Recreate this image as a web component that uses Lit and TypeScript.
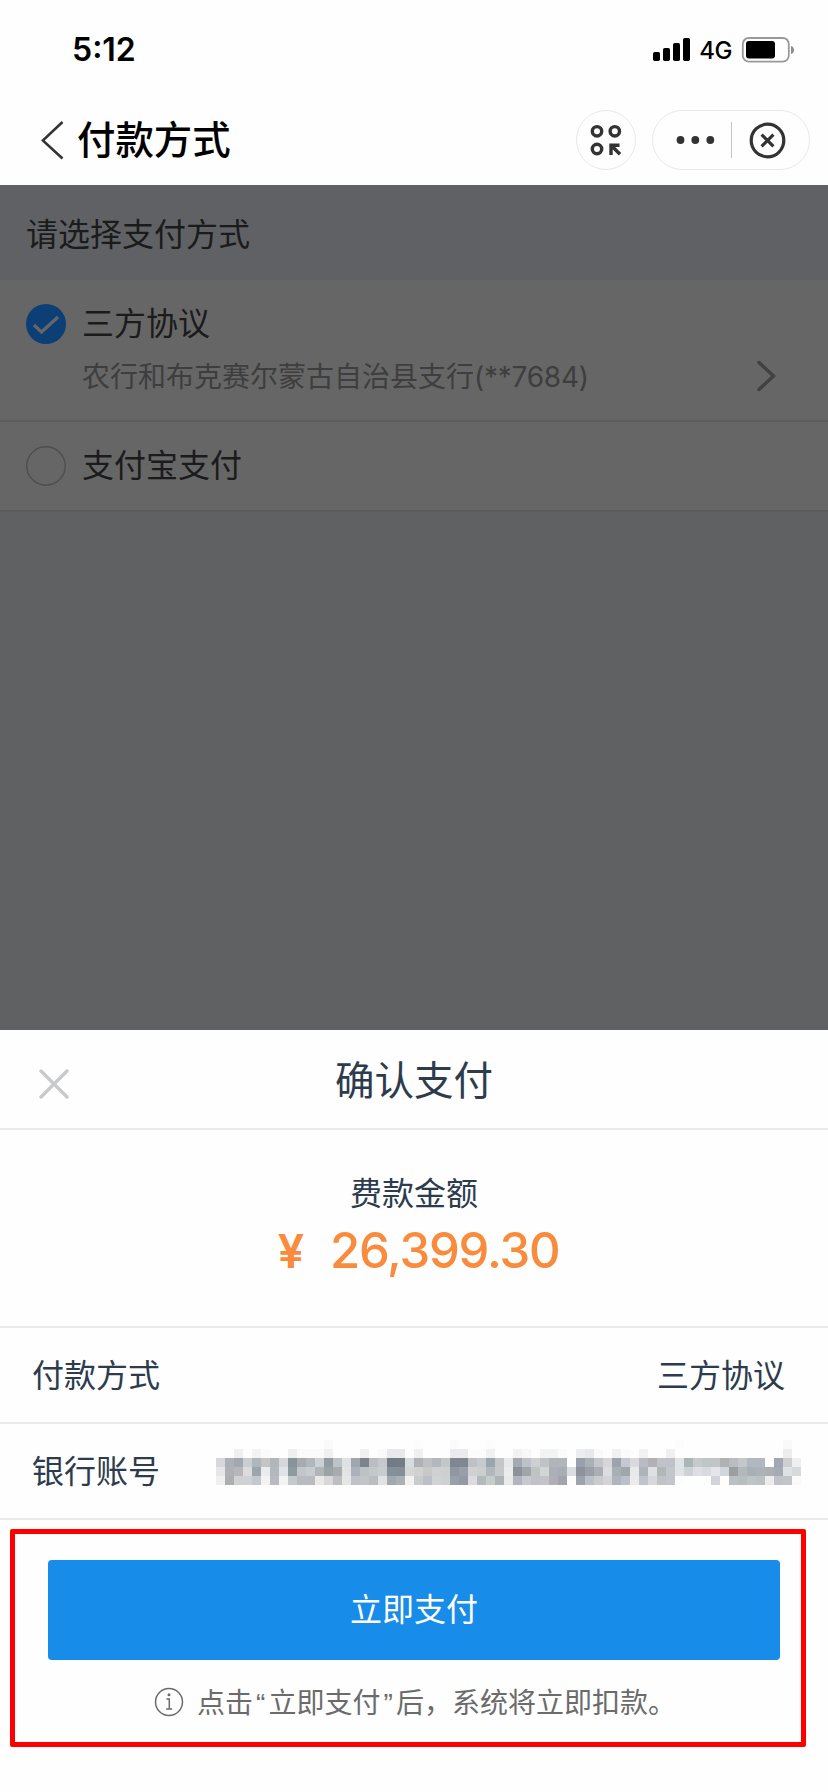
import { LitElement, html, css, svg } from "lit";
import { customElement } from "lit/decorators.js";

const CELL = 9;
const MASK_ROWS: string[] = [
  ". . . . . . . . . . . . fafafa . . . . . . . . . fcfcfc . . . fbfbfb . . . fcfcfc . . . . . . . . . . . . . . . . . . . . fcfcfc . . . . . . . . . . . f9f9f9 .",
  ". . f0f0f0 . f2f3f3 fbfbfb . . eeefef fbfbfb fbfbfb fbfbfb eff1f1 . . . eff0f0 . fafafa e8e9ec e9e9ec . eff1f0 . . . ebebee ebebee fcfcfc fcfcfc f0f1f1 . . f2f2f3 f8f8f8 . f2f3f3 f2f3f3 fafbfb . ecedee e6e8ec fafafa . f0f1f1 fbfbfb . f2f2f3 . . eff0f0 . . . . . . . . . . . . ededee .",
  "d7d8dc abb0ba a2a7b2 c9ced2 b0b7bb c4c4c7 b0b6b9 d5d7da 87929b a8abae b1b7ba ccd1d4 939ca4 bec3c8 dfe2e4 a0a6ad 7b838b babdc1 c6c9cc 727b86 747c86 d8dbde b0b0b5 bfbfc4 b3b8c0 c3c7ca 7f8790 7f8790 bec2c6 c6cacc 9ca4ae c3c7ca e8e8e8 a4a9b2 bdc2c8 ced0d3 bfc3c6 b0b5b9 b0b6ba fcfdfd 999fab abb0b7 c3c7cb d4d6d8 9ea2ac c5c8cf d9dade b8bbc1 b2b2b6 c0c4c7 bfc3c9 e0e3e6 abb4b6 c6cacd c0c5c7 c1c5c7 afb2b3 b9bdc0 c4c7ca b2b8bf b2b8bf fdfdfd a2a7b3 ced0cf eeefef",
  "e6e6e8 b0b0b5 b6b7ba dcdcdf 9ca5a9 e9ebef b2b8bb dfe4e8 8d9a9f c0c6c9 c9ccce b0b5b9 9ba3a7 a7acaf e1e3e4 abb2bd bcc2c5 c5c8cb c9cccf 84909a 868f98 d5d6d8 cfd2d1 c7c9c9 ced1d0 ccd0cf 9097a3 999eab cfd1d3 cacece b1b7bc c5c9cc ececec 8c919b 9fa5ab bfc3c1 d3d6d7 abafb7 a9adb4 dadee1 8e929d 9a9fa9 abafb4 dbdddf a9b0b5 a0a7ab e7e9ea afb4bb dfe0e2 b0b7b8 c3c6cb dee3e6 ced2d5 dddfe2 d5dbdf e5e6ea cfd6dc 9b9fa2 b3b8bb a9afb7 adb2b8 acb0b4 a4abb5 dee2e5 d8dad9",
  "f0f0f2 adadb2 cfd2d4 cfd2d4 c4c8cc f3f3f5 b7bbbf f2f3f3 c5c9cc b8bcc1 b8bcc1 e9e9ea d8d8da bdbdc3 e6e6e8 bec2c6 c2c5c8 b9bdc0 dfe3e6 a2a8ad abb0b4 f1f2f2 c8ccca bcbfc3 d0d3d3 cdd1d1 9aa0ab 9499a4 dcdce0 b3babb c5ccc9 adb3b7 eaeaea b0b5bf c6cacd bfc2c6 c3c4ca b1afb5 a2a3ab fcfcfc 9ea2ad bcc0c6 c9ccce d3d5d5 b0b5bd bbc1cb ebebeb bfc3cb d7d8dc c0c3c6 c2c5c9 fcfcfc . . . d2d3d8 . bbc0c5 b8bdc0 bfc4c7 bcc1c4 ececef bfc2ca c1c5c9 fafafa",
];

@customElement("masked-account")
export class MaskedAccount extends LitElement {
  static styles = css`
    :host { display: block; width: 585px; height: 45px; }
    svg { display: block; }
  `;
  render() {
    return html`<svg width="585" height="45" shape-rendering="crispEdges">
      ${MASK_ROWS.map((row, y) =>
        row.split(" ").map((c, x) =>
          c === "." ? null : svg`<rect x=${x * CELL} y=${y * CELL} width=${CELL} height=${CELL} fill=${"#" + c}></rect>`
        )
      )}
    </svg>`;
  }
}

@customElement("app-root")
export class AppRoot extends LitElement {
  static styles = css`
    :host {
      display: flex;
      flex-direction: column;
      width: 828px;
      height: 1792px;
      overflow: hidden;
      background: #fefefe;
      font-family: Inter, "Noto Sans CJK SC", sans-serif;
      color: #2d3c4d;
    }
    * { box-sizing: border-box; }
    svg { display: block; flex: none; }
    .status {
      height: 100px;
      display: flex;
      align-items: center;
      padding: 0 33px 0 72px;
      color: #000;
    }
    .time { font-size: 32px; font-weight: 600; flex: 1; margin-top: -2px; }
    .net { font-size: 24px; font-weight: 500; margin: 1px 9px 0 8px; letter-spacing: -0.5px; }
    .nav {
      height: 85px;
      display: flex;
      align-items: center;
      padding: 0 18px 5px 41px;
    }
    .nav-title { flex: 1; margin: -6px 0 0 12px; font-size: 38.4px; font-weight: 500; color: #000; }
    .round { width: 60px; height: 60px; border: 1px solid #e9e9e9; border-radius: 30px; display: grid; place-items: center; }
    .capsule {
      width: 158px; height: 60px; margin-left: 16px; border: 1px solid #e9e9e9; border-radius: 30px;
      display: flex; align-items: center; padding-left: 23px;
    }
    .sep { width: 1px; height: 36px; background: #c4c4c4; margin: 0 17px 0 16px; }
    .dimmed { height: 845px; background: #606163; color: #1b1b1c; font-size: 32px; }
    .hint { height: 95px; background: #5f6164; padding: 0 26px; line-height: 100px; }
    .option { background: #666; border-bottom: 2px solid #5c5c5d; padding: 0 49px 0 26px; }
    .first { height: 142px; padding-top: 20px; }
    .second { height: 90px; padding-top: 20px; }
    .line { display: flex; align-items: center; height: 48px; gap: 16px; }
    .line span { margin-top: -6px; }
    .sub { height: 56px; padding-left: 56px; display: flex; align-items: center; justify-content: space-between; font-size: 28px; color: #3e3e3e; }
    .sub span { margin-top: -3px; }
    .sub .card { letter-spacing: -0.25px; }
    .sheet-head { height: 100px; border-bottom: 2px solid #e9e9e9; display: grid; grid-template-columns: 1fr auto 1fr; align-items: center; padding: 0 39px; }
    .close { margin-top: 9px; }
    .sheet-title { font-size: 39.5px; line-height: 60px; margin-top: 4px; }
    .amount { height: 198px; border-bottom: 2px solid #e9e9e9; padding-top: 40px; text-align: center; }
    .label { font-size: 32px; line-height: 48px; }
    .money { font-size: 49px; font-weight: 500; line-height: 62px; letter-spacing: -1.2px; color: #f98b3d; margin-top: 2px; display: flex; justify-content: center; gap: 27px; padding-left: 9px; }
    .yen { font-size: 47px; font-weight: 600; }
    .row { height: 96px; border-bottom: 2px solid #e9e9e9; display: flex; align-items: center; justify-content: space-between; padding: 0 43px 0 32px; font-size: 32px; }
    .row span { margin-top: -4px; }
    .account { padding-right: 27px; }
    masked-account { margin-top: -17px; }
    .frame { width: 796px; height: 218px; margin: 9px 0 0 10px; border: 5px solid #fe0000; border-radius: 2px; padding: 26px 21px 0 33px; }
    .pay { display: block; width: 732px; height: 100px; border: 0; border-radius: 4px; background: #188ce9; color: #fff; font: inherit; font-size: 32px; padding: 0 0 6px; }
    .tip { display: flex; align-items: center; height: 84px; padding-left: 106px; font-size: 28px; color: #6b6b6b; white-space: nowrap; }
    .tip span { margin: -3px 0 0 13px; }
    .tip b { display: inline-block; width: 15.5px; font-family: "Liberation Sans", sans-serif; font-weight: 400; text-align: center; }
  `;

  render() {
    return html`
      <div class="status">
        <span class="time">5:12</span>
        <svg width="38" height="24" viewBox="0 0 38 24">
          <rect x="0" y="14" width="7" height="9" rx="1.8" /><rect x="10" y="10" width="7" height="13" rx="1.8" />
          <rect x="20" y="5" width="7" height="18" rx="1.8" /><rect x="30" y="0" width="7" height="23" rx="1.8" />
        </svg>
        <span class="net">4G</span>
        <svg width="54" height="26" viewBox="0 0 54 26">
          <rect x="1.8" y="1" width="46" height="23.6" rx="6" fill="none" stroke="#999" stroke-width="1.8" />
          <rect x="5" y="4" width="29" height="17.5" rx="3" />
          <path d="M50 9c4 1 4 7 0 8z" fill="#8c8c8c" />
        </svg>
      </div>
      <div class="nav">
        <svg width="24" height="40" viewBox="0 0 24 40"><path d="M21.5 2L1.8 20.5L21.5 38.5" fill="none" stroke="#333" stroke-width="2.6" /></svg>
        <div class="nav-title">付款方式</div>
        <div class="round">
          <svg width="32" height="32" viewBox="0 0 32 32" fill="none" stroke="#333" stroke-width="3.4">
            <circle cx="7" cy="7.3" r="4.7" /><circle cx="24.8" cy="7.3" r="4.7" /><circle cx="7" cy="25" r="4.7" />
            <path d="M29.5 21.2H21V31M21.5 21.7L30 30.2" />
          </svg>
        </div>
        <div class="capsule">
          <svg width="39" height="10" viewBox="0 0 39 10" fill="#333"><circle cx="4.5" cy="5" r="3.9" /><circle cx="19.3" cy="5" r="3.9" /><circle cx="34.3" cy="5" r="3.9" /></svg>
          <div class="sep"></div>
          <svg width="37" height="37" viewBox="0 0 37 37" fill="none" stroke="#333" stroke-width="3.2">
            <circle cx="18.5" cy="18.5" r="16.3" /><path d="M12.6 12.6L24.4 24.4M24.4 12.6L12.6 24.4" />
          </svg>
        </div>
      </div>
      <div class="dimmed">
        <div class="hint">请选择支付方式</div>
        <div class="option first">
          <div class="line">
            <svg width="40" height="40" viewBox="0 0 40 40"><circle cx="20" cy="20" r="20" fill="#0b3f75" /><path d="M8 21L15.5 28L32 13" fill="none" stroke="#666" stroke-width="3.2" /></svg>
            <span>三方协议</span>
          </div>
          <div class="sub">
            <span>农行和布克赛尔蒙古自治县支行<span class="card">(**7684)</span></span>
            <svg width="24" height="34" viewBox="0 0 24 34"><path d="M4 3.5L18.5 17L4 30.5" fill="none" stroke="#414141" stroke-width="3.4" stroke-linecap="round" /></svg>
          </div>
        </div>
        <div class="option second">
          <div class="line">
            <svg width="40" height="40" viewBox="0 0 40 40"><circle cx="20" cy="20" r="19.2" fill="none" stroke="#4e4e4e" stroke-width="1.4" /></svg>
            <span>支付宝支付</span>
          </div>
        </div>
      </div>
      <div class="sheet-head">
        <svg class="close" width="30" height="30" viewBox="0 0 30 30"><path d="M2 2L28 28M28 2L2 28" stroke="#c8c9cb" stroke-width="3.4" stroke-linecap="round" /></svg>
        <span class="sheet-title">确认支付</span>
      </div>
      <div class="amount">
        <div class="label">费款金额</div>
        <div class="money"><span class="yen">¥</span><span>26,399.30</span></div>
      </div>
      <div class="row"><span>付款方式</span><span>三方协议</span></div>
      <div class="row account"><span>银行账号</span><masked-account></masked-account></div>
      <div class="frame">
        <button class="pay">立即支付</button>
        <div class="tip">
          <svg width="30" height="30" viewBox="0 0 30 30" fill="none" stroke="#6b6b6b" stroke-width="1.5">
            <circle cx="15" cy="15" r="13.5" /><path d="M12.5 12H15.3V22M12.2 22H18.2" /><circle cx="15" cy="7.8" r="1.5" fill="#6b6b6b" stroke="none" />
          </svg>
          <span>点击<b>“</b>立即支付<b>”</b>后，系统将立即扣款。</span>
        </div>
      </div>
    `;
  }
}
